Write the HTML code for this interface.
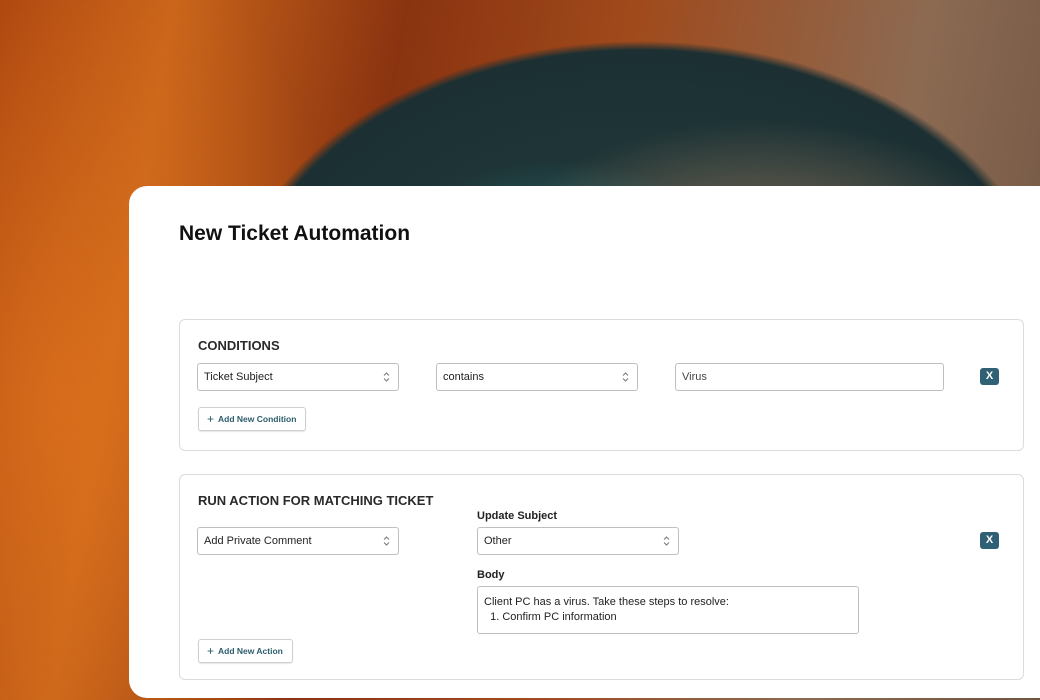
<!DOCTYPE html>
<html><head><style>
*{box-sizing:border-box;margin:0;padding:0}
body{width:1040px;height:700px;overflow:hidden;position:relative;font-family:"Liberation Sans",sans-serif;color:#1a1a1a;
background:
radial-gradient(ellipse 200px 140px at 560px 300px,rgba(45,125,125,.95),rgba(45,115,115,0) 100%),
radial-gradient(ellipse 280px 170px at 760px 290px,rgba(160,125,95,.95),rgba(150,120,90,0) 100%),
radial-gradient(ellipse 440px 300px at 640px 320px,#223c3d 0%,#1c3033 90%,rgba(30,40,40,0) 93%),
radial-gradient(ellipse 300px 500px at 60px 400px,rgba(230,120,30,.6),rgba(0,0,0,0) 100%),
linear-gradient(100deg,#a8420f 0%,#c8641a 15%,#8a3310 35%,#a04a1c 55%,#8c6a52 80%,#6e5442 100%);}
.card{position:absolute;left:129px;top:186px;width:940px;height:512px;background:#fff;border-radius:18px 0 0 18px}
h1{position:absolute;left:50px;top:36px;font-size:21px;font-weight:bold;color:#111}
.box{position:absolute;left:50px;width:845px;border:1px solid #dcdcdc;border-radius:6px;background:#fff}
.t{position:absolute;left:18px;font-size:13px;font-weight:bold;color:#2a2a2a}
.sel,.inp{position:absolute;height:28px;border:1px solid #bfbfbf;border-radius:3px;font-size:11px;line-height:26px;padding-left:6px;color:#222;background:#fff}
.ar{position:absolute;right:8px;top:7px}
.x{position:absolute;width:19px;height:17px;background:#2f6073;border-radius:3px;color:#fff;font-size:11px;font-weight:bold;text-align:center;line-height:17px}
.btn{position:absolute;left:18px;height:24px;border:1px solid #cfcfcf;border-radius:3px;font-size:8.5px;font-weight:bold;color:#2b5d6c;line-height:22px;padding:0 9px 0 8px;box-shadow:0 1px 1px rgba(0,0,0,.1)}
.btn b{font-size:12px;font-weight:normal;margin-right:4px;vertical-align:-1px}
.lbl{position:absolute;font-size:11px;font-weight:bold;color:#222}
</style></head><body>
<div class="card">
<h1>New Ticket Automation</h1>
<div class="box" style="top:133px;height:132px">
<div class="t" style="top:18px">CONDITIONS</div>
<div class="sel" style="left:17px;top:43px;width:202px">Ticket Subject<svg class="ar" width="7" height="12" viewBox="0 0 7 12"><path d="M1 4.5L3.5 2 6 4.5M1 7.5L3.5 10 6 7.5" fill="none" stroke="#777" stroke-width="1"/></svg></div>
<div class="sel" style="left:256px;top:43px;width:202px">contains<svg class="ar" width="7" height="12" viewBox="0 0 7 12"><path d="M1 4.5L3.5 2 6 4.5M1 7.5L3.5 10 6 7.5" fill="none" stroke="#777" stroke-width="1"/></svg></div>
<div class="inp" style="left:495px;top:43px;width:269px;color:#444">Virus</div>
<div class="x" style="left:800px;top:48px">X</div>
<div class="btn" style="top:87px"><b>+</b>Add New Condition</div>
</div>
<div class="box" style="top:288px;height:206px">
<div class="t" style="top:18px">RUN ACTION FOR MATCHING TICKET</div>
<div class="lbl" style="left:297px;top:35px">Update Subject</div>
<div class="sel" style="left:17px;top:52px;width:202px">Add Private Comment<svg class="ar" width="7" height="12" viewBox="0 0 7 12"><path d="M1 4.5L3.5 2 6 4.5M1 7.5L3.5 10 6 7.5" fill="none" stroke="#777" stroke-width="1"/></svg></div>
<div class="sel" style="left:297px;top:52px;width:202px">Other<svg class="ar" width="7" height="12" viewBox="0 0 7 12"><path d="M1 4.5L3.5 2 6 4.5M1 7.5L3.5 10 6 7.5" fill="none" stroke="#777" stroke-width="1"/></svg></div>
<div class="x" style="left:800px;top:57px">X</div>
<div class="lbl" style="left:297px;top:94px">Body</div>
<div class="inp" style="left:297px;top:111px;width:382px;height:48px;line-height:15px;padding-top:8px">Client PC has a virus. Take these steps to resolve:<br>&nbsp;&nbsp;1. Confirm PC information</div>
<div class="btn" style="top:164px"><b>+</b>Add New Action</div>
</div>
</div>
</body></html>
